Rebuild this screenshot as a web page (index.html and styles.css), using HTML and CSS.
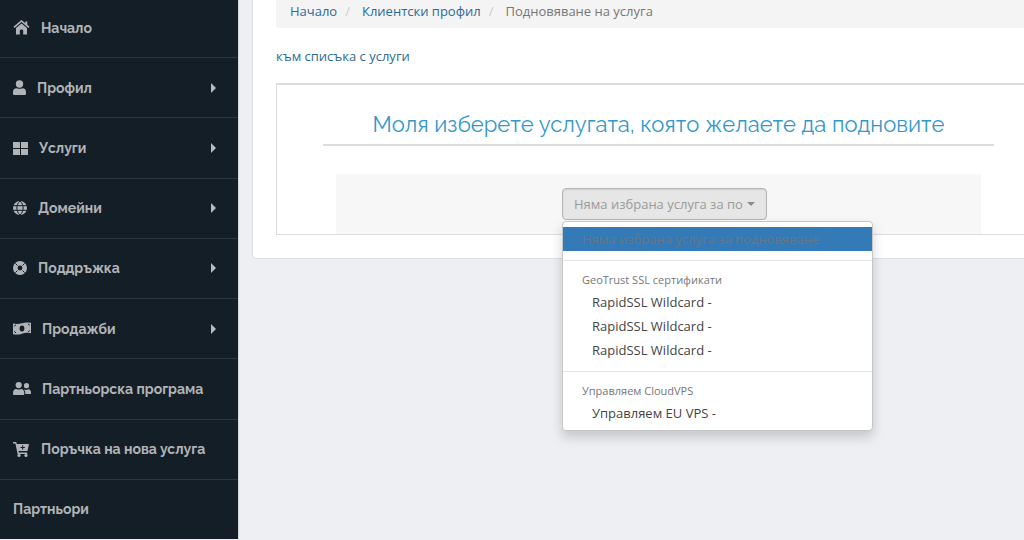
FILE: index.html
```html
<!DOCTYPE html>
<html lang="bg">
<head>
<meta charset="utf-8">
<meta name="viewport" content="width=device-width, initial-scale=1">
<title>Подновяване на услуга</title>
<link rel="stylesheet" href="styles.css">
</head>
<body>
<div class="page">
  <nav class="sidebar">
    <ul class="menu">
      <li><a class="menu-link" href="#"><svg class="icon" width="17" height="15" viewBox="0 0 17 15"><path d="M1 7.3 8.5 1 16 7.3" fill="none" stroke="currentColor" stroke-width="1.6"/><path d="M12.300 1.500h2v4l-2-1.700z"/><path d="M3 8.100 8.500 3.500 14 8.100V14.500H10.200V10.500Q10.200 9.600 8.500 9.600T6.800 10.500V14.500H3z"/></svg>Начало</a></li>
      <li><a class="menu-link" href="#"><svg class="icon" width="13" height="15" viewBox="0 0 13 15"><circle cx="6.500" cy="4" r="3.700"/><path d="M0 14V12Q0 8.200 3.600 8.200 6.500 9.300 9.400 8.200 13 8.200 13 12V14Q13 15 12 15H1Q0 15 0 14z"/></svg>Профил<span class="caret-right"></span></a></li>
      <li><a class="menu-link" href="#"><svg class="icon" width="15" height="13" viewBox="0 0 15 13"><path d="M0 0h7v6H0zM8 0h7v6H8zM0 7h7v6H0zM8 7h7v6H8z"/></svg>Услуги<span class="caret-right"></span></a></li>
      <li><a class="menu-link" href="#"><svg class="icon" width="14" height="14" viewBox="0 0 14 14"><circle cx="7" cy="7" r="7"/><path class="cut" d="M0 4.700H14M0 9.300H14M7 0C2.800 3.500 2.800 10.500 7 14M7 0C11.200 3.500 11.200 10.500 7 14"/></svg>Домейни<span class="caret-right"></span></a></li>
      <li><a class="menu-link" href="#"><svg class="icon" width="14" height="14" viewBox="0 0 14 14"><circle cx="7" cy="7" r="4.700" fill="none" stroke="currentColor" stroke-width="4.600"/><path class="cut" d="m2.300 2.300 2.200 2.200M9.500 9.500l2.200 2.200M11.700 2.300 9.500 4.500M4.500 9.500l-2.200 2.200"/></svg>Поддръжка<span class="caret-right"></span></a></li>
      <li><a class="menu-link" href="#"><svg class="icon" width="18" height="13" viewBox="0 0 18 13"><path d="M0 1.500Q4.500 2.600 9 1.200T18 .8V11.200Q13.500 10.200 9 11.700T0 12.200z"/><ellipse class="hole" cx="9" cy="6.500" rx="2.400" ry="3"/><path class="cut" d="M1.200 4.200 3 2.800M15 2l1.800 1.300M1.200 9.300 3 11M15 10l1.800-1.500"/></svg>Продажби<span class="caret-right"></span></a></li>
      <li><a class="menu-link" href="#"><svg class="icon" width="18" height="13" viewBox="0 0 18 13"><circle cx="5.700" cy="3.100" r="3.100"/><path d="M0 11.500Q0 7 3.300 7 5.700 8 8.100 7 11.300 7 11.300 11.500V12Q11.300 13 10.300 13H1Q0 13 0 12z"/><circle cx="13.500" cy="3.700" r="2.600"/><path d="M10.700 7.600Q13.500 8.300 15.200 7.300 18 7.300 18 11V12H12.400Q12.400 8.600 10.700 7.600z"/></svg>Партньорска програма</a></li>
      <li><a class="menu-link" href="#"><svg class="icon" width="17" height="15" viewBox="0 0 17 15"><path d="M0 0H3.200L3.800 2H16L14.500 9H5.500L5.800 10.500H14.200V12H4.600L2.400 1.600H0z"/><circle cx="6" cy="13.400" r="1.600"/><circle cx="13" cy="13.400" r="1.600"/><path class="cut" d="M9.700 3.300V7.700M7.500 5.500H11.900"/></svg>Поръчка на нова услуга</a></li>
      <li><a class="menu-link" href="#">Партньори</a></li>
    </ul>
  </nav>
  <main class="content">
    <section class="panel">
      <ol class="breadcrumb">
        <li><a href="#">Начало</a></li>
        <li><a href="#">Клиентски профил</a></li>
        <li>Подновяване на услуга</li>
      </ol>
      <a class="back" href="#">към списъка с услуги</a>
      <div class="box">
        <h1 class="title">Моля изберете услугата, която желаете да подновите</h1>
        <div class="chooser">
          <div class="select">
            <button class="select-button" type="button" aria-haspopup="listbox" aria-expanded="true"><span class="select-value">Няма избрана услуга за по</span><span class="caret-down"></span></button>
            <div class="dropdown" role="listbox" aria-label="Услуга">
              <a class="option selected" role="option" aria-selected="true" href="#">Няма избрана услуга за подновяване</a>
              <div class="divider"></div>
              <div class="group">GeoTrust SSL сертификати</div>
              <a class="option nested" role="option" href="#">RapidSSL Wildcard -</a>
              <a class="option nested" role="option" href="#">RapidSSL Wildcard -</a>
              <a class="option nested" role="option" href="#">RapidSSL Wildcard -</a>
              <div class="divider"></div>
              <div class="group">Управляем CloudVPS</div>
              <a class="option nested" role="option" href="#">Управляем EU VPS -</a>
            </div>
          </div>
        </div>
      </div>
    </section>
  </main>
</div>
</body>
</html>
```
FILE: styles.css
```css
* { box-sizing: border-box; }

body {
  margin: 0;
  background: #eeeff2;
  color: #777;
  font: 13px/20px "Open Sans", "Noto Sans", sans-serif;
  font-feature-settings: "locl" 0;
  overflow: hidden;
}

a { color: #2f6a94; text-decoration: none; }

.page { display: flex; min-height: 100vh; }

.sidebar {
  flex: 0 0 239px;
  border-right: 1px solid #d5d8db;
  background: #141e27;
}

.menu {
  display: grid;
  grid-auto-rows: 1fr;
  min-height: calc(100vh + 2px);
  margin: -2px 0 0;
  padding: 0;
  list-style: none;
}

.menu li { display: grid; border-bottom: 1px solid #2d3742; }
.menu li:last-child { border-bottom-color: #eeeff2; }

.menu-link {
  display: flex;
  align-items: center;
  padding: 0 22px 0 13px;
  color: #b1b4b7;
  font: 700 14px/20px Raleway, Lato, sans-serif;
  font-feature-settings: "locl" 0;
}

.icon { flex: none; margin-right: 11px; fill: currentColor; }
.cut { fill: none; stroke: #141e27; stroke-width: 1; }
.hole { fill: #141e27; }

.caret-right {
  margin-left: auto;
  border: 5px solid transparent;
  border-left-color: #b9bcbe;
  border-right: 0;
}

.content { flex: 1; min-width: 0; margin: 0 -41px 0 13px; }

.panel {
  margin-top: -20px;
  padding: 12px 23px 23px;
  border: 1px solid #dcdfe1;
  border-radius: 4px;
  background: #fff;
}

.breadcrumb {
  display: flex;
  margin: 0 0 18px;
  padding: 8px 14px 7px;
  border-radius: 4px;
  background: #f4f4f4;
  list-style: none;
}

.breadcrumb li + li::before { content: "/"; padding: 0 12px 0 8px; color: #ccc; }

.back { display: inline-block; margin-bottom: 17px; }

.box { padding: 24px 46px 0; border: 1px solid #ddd; border-top-width: 2px; }

.title {
  margin: 0 0 28px;
  padding-bottom: 5px;
  border-bottom: 2px solid #ddd;
  color: #3497cb;
  font: 400 22px/30px Raleway, Lato, sans-serif;
  font-feature-settings: "locl" 0;
  text-align: center;
}

.chooser {
  display: flex;
  justify-content: center;
  margin: 0 13px;
  padding: 14px 0;
  background: #f7f7f7;
}

.select { position: relative; margin-right: -12px; }

.select-button {
  display: flex;
  align-items: center;
  width: 205px;
  padding: 5px 11px;
  border: 1px solid #b5b5b5;
  border-radius: 4px;
  background: #e6e6e6;
  color: #9b9b9b;
  font: inherit;
  box-shadow: inset 0 1px 2px rgba(0, 0, 0, .1);
}

.select-value { flex: 1; white-space: nowrap; text-align: left; }

.caret-down {
  margin-left: 4px;
  border: 4px solid transparent;
  border-top-color: #8b8b8b;
  border-bottom: 0;
}

.dropdown {
  position: absolute;
  top: calc(100% + 1px);
  left: 0;
  width: 311px;
  padding: 5px 0;
  border: 1px solid #c5c6c7;
  border-radius: 4px;
  background: #fff;
  box-shadow: 0 6px 12px rgba(0, 0, 0, .175);
}

.option { display: block; padding: 2px 19px; color: #444; }
.option.nested { padding-left: 29px; }
.option.selected { background: #337ab7; color: #697782; }
.divider { height: 1px; margin: 9px 0; background: #e5e5e5; }
.group { padding: 0 19px; font-size: 11px; }
```
